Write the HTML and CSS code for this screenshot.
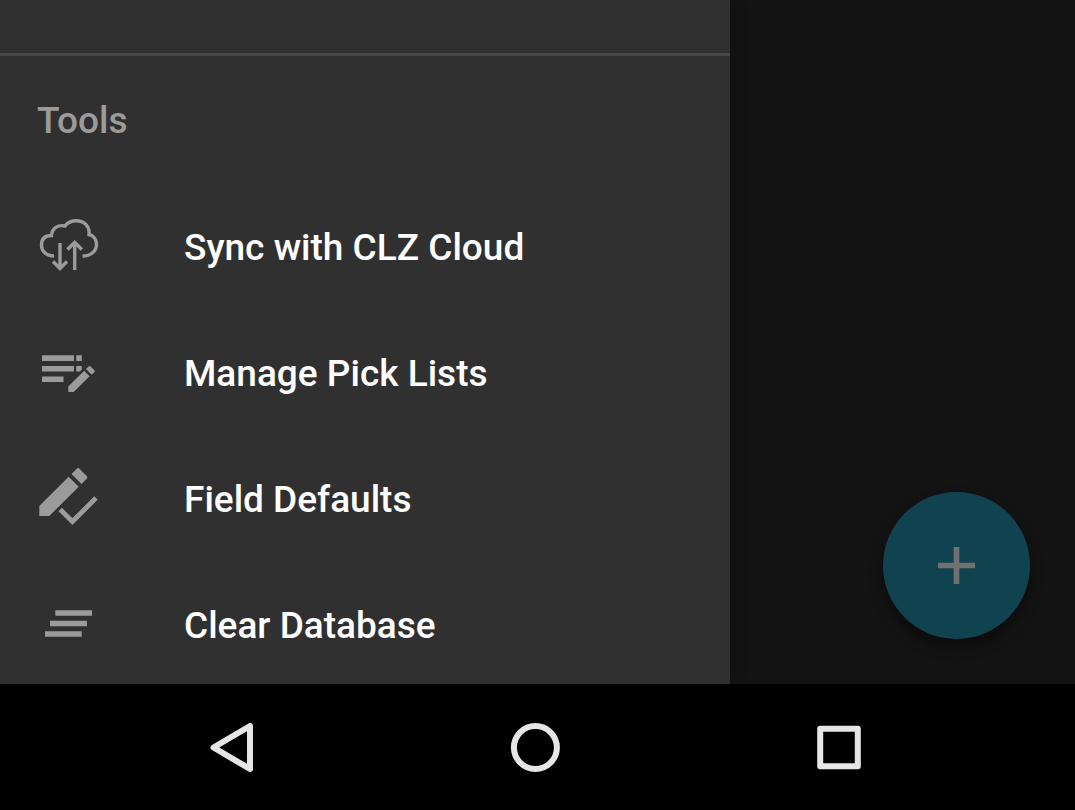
FILE: index.html
```html
<!DOCTYPE html>
<html lang="en">
<head>
<meta charset="utf-8">
<meta name="viewport" content="width=device-width, initial-scale=1">
<title>Tools</title>
<link rel="stylesheet" href="styles.css">
</head>
<body>
<div class="screen">
  <div class="app">
    <aside class="drawer">
      <hr class="divider">
      <h2 class="section-title">Tools</h2>
      <nav class="menu" aria-label="Tools">
        <button class="item" type="button">
          <svg class="icon" viewBox="0 0 64 64" aria-hidden="true">
            <g fill="none" stroke="currentColor" stroke-width="3.400">
              <path d="M17 41C9 41 4.500 36 4.500 30C4.500 24 8 20.500 14.500 20.500C15 13 21 9.500 28 11C31 7 35 5.700 39 5.700C47 5.700 53 11 52 19.500C57 20.500 59.500 25 59.500 29.500C59.500 36 54 41 45.500 41"/>
              <path d="M23 28v25M16 46.500l7 7 7-7M37.700 55V29M30.500 34.500l7.200-7.200 7.200 7.200"/>
            </g>
          </svg>
          <span>Sync with CLZ Cloud</span>
        </button>
        <button class="item" type="button">
          <svg class="icon" viewBox="0 0 64 64" aria-hidden="true">
            <path fill="currentColor" d="M5 14.300h32v5.700H5zM39.200 14.300h5.600v5.700h-5.600zM5 25h32v5.500H5zM39.200 25h5.600v3.500l-2 2h-3.600zM5 35.500h21.500V41H5zM31.300 51v-5.400L47.200 29.800l5.400 5.400L36.700 51zM49 28l2.600-2.600q1-1 2 0l3.800 3.800q1 1 0 2L54.600 33.700z"/>
          </svg>
          <span>Manage Pick Lists</span>
        </button>
        <button class="item" type="button">
          <svg class="icon" viewBox="0 0 64 64" aria-hidden="true">
            <path fill="currentColor" d="M2.300 49V39L31.700 9.700l10 10L12.300 49zM34.500 6.900l5-5q1.600-1.600 3.200 0l7 7q1.400 1.400 0 2.900l-5.200 5.100z"/>
            <path fill="none" stroke="currentColor" stroke-width="4.800" d="M23.200 42.500l12.200 12L59 31"/>
          </svg>
          <span>Field Defaults</span>
        </button>
        <button class="item" type="button">
          <svg class="icon" viewBox="0 0 64 64" aria-hidden="true">
            <path fill="currentColor" d="M18.300 17.200H55v5.500H18.300zM13 27.700h37v5.500H13zM8 38.200h36.700v5.500H8z"/>
          </svg>
          <span>Clear Database</span>
        </button>
      </nav>
    </aside>
    <main class="backdrop">
      <button class="fab" type="button" aria-label="Add">
        <svg class="plus" viewBox="0 0 38 38" aria-hidden="true">
          <path fill="none" stroke="currentColor" stroke-width="5.600" d="M18.500 0v37M0 18.500h37"/>
        </svg>
      </button>
    </main>
  </div>
  <footer class="navbar">
    <button class="key" type="button" aria-label="Back">
      <svg class="glyph" viewBox="0 0 56 56" aria-hidden="true">
        <path d="M10.500 28.500L47 7v43z"/>
      </svg>
    </button>
    <button class="key" type="button" aria-label="Home">
      <svg class="glyph" viewBox="0 0 56 56" aria-hidden="true">
        <circle cx="28.400" cy="28.500" r="21.500"/>
      </svg>
    </button>
    <button class="key" type="button" aria-label="Recent apps">
      <svg class="glyph" viewBox="0 0 56 56" aria-hidden="true">
        <rect x="9.200" y="9.700" width="37.600" height="37.600"/>
      </svg>
    </button>
  </footer>
</div>
</body>
</html>
```
FILE: styles.css
```css
* {
  box-sizing: border-box;
}

body {
  margin: 0;
  background: #000;
  font-family: Roboto, "Liberation Sans", sans-serif;
}

button {
  margin: 0;
  padding: 0;
  border: 0;
  background: none;
  color: inherit;
  font: inherit;
  cursor: pointer;
}

.screen {
  display: flex;
  flex-direction: column;
  height: 100vh;
}

.app {
  display: flex;
  flex: 1;
  min-height: 0;
  overflow: hidden;
  background: #131313;
}

.drawer {
  flex: 0 1 730px;
  padding-top: 53px;
  overflow: hidden;
  background: #303030;
  box-shadow: 0 0 16px rgba(0, 0, 0, 0.3);
}

.divider {
  height: 3px;
  margin: 0 0 2px;
  border: 0;
  background: #484848;
}

.section-title {
  margin: 0;
  padding: 0 37px;
  color: #9b9b9b;
  font-size: 37px;
  font-weight: 500;
  line-height: 126px;
}

.menu {
  display: flex;
  flex-direction: column;
}

.item {
  display: flex;
  align-items: center;
  gap: 83px;
  height: 126px;
  padding: 0 37px;
  color: #fff;
  font-size: 37px;
  font-weight: 500;
  text-align: left;
}

.icon {
  flex: none;
  width: 64px;
  height: 64px;
  color: #9b9b9b;
}

.backdrop {
  display: flex;
  flex: 1;
  align-items: flex-end;
  justify-content: flex-end;
  padding: 45px;
}

.fab {
  display: flex;
  flex: none;
  align-items: center;
  justify-content: center;
  width: 147px;
  height: 147px;
  border-radius: 50%;
  background: #114250;
  color: #707070;
  box-shadow: 0 8px 14px rgba(0, 0, 0, 0.4);
}

.plus {
  width: 38px;
  height: 38px;
}

.navbar {
  display: flex;
  flex: none;
  height: 126px;
  padding: 0 84px 0 79px;
  background: #000;
}

.key {
  display: flex;
  flex: 1;
  align-items: center;
  justify-content: center;
}

.glyph {
  width: 56px;
  height: 56px;
  fill: none;
  stroke: #e6e6e6;
  stroke-width: 6px;
  stroke-linejoin: round;
}
```
